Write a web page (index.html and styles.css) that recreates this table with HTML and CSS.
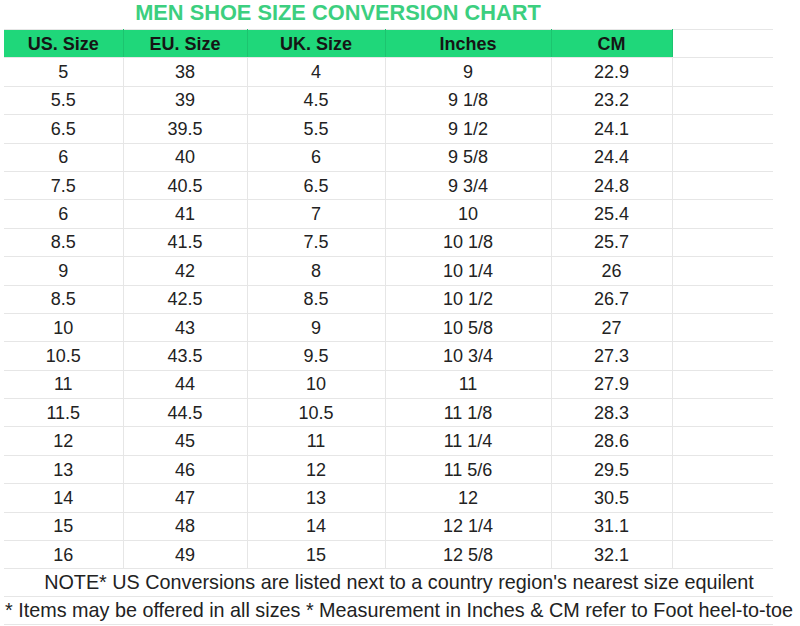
FILE: index.html
```html
<!DOCTYPE html>
<html>
<head>
<meta charset="utf-8">
<link rel="stylesheet" href="styles.css">
</head>
<body>
<div class="sheet">
  <div class="title-row"><div class="title">MEN SHOE SIZE CONVERSION CHART</div></div>
  <table class="chart">
    <colgroup>
      <col class="c1"><col class="c2"><col class="c3"><col class="c4"><col class="c5"><col class="c6">
    </colgroup>
    <thead>
      <tr><th>US. Size</th><th>EU. Size</th><th>UK. Size</th><th>Inches</th><th>CM</th><th class="blank"></th></tr>
    </thead>
    <tbody>
      <tr><td>5</td><td>38</td><td>4</td><td>9</td><td>22.9</td><td></td></tr>
      <tr><td>5.5</td><td>39</td><td>4.5</td><td>9 1/8</td><td>23.2</td><td></td></tr>
      <tr><td>6.5</td><td>39.5</td><td>5.5</td><td>9 1/2</td><td>24.1</td><td></td></tr>
      <tr><td>6</td><td>40</td><td>6</td><td>9 5/8</td><td>24.4</td><td></td></tr>
      <tr><td>7.5</td><td>40.5</td><td>6.5</td><td>9 3/4</td><td>24.8</td><td></td></tr>
      <tr><td>6</td><td>41</td><td>7</td><td>10</td><td>25.4</td><td></td></tr>
      <tr><td>8.5</td><td>41.5</td><td>7.5</td><td>10 1/8</td><td>25.7</td><td></td></tr>
      <tr><td>9</td><td>42</td><td>8</td><td>10 1/4</td><td>26</td><td></td></tr>
      <tr><td>8.5</td><td>42.5</td><td>8.5</td><td>10 1/2</td><td>26.7</td><td></td></tr>
      <tr><td>10</td><td>43</td><td>9</td><td>10 5/8</td><td>27</td><td></td></tr>
      <tr><td>10.5</td><td>43.5</td><td>9.5</td><td>10 3/4</td><td>27.3</td><td></td></tr>
      <tr><td>11</td><td>44</td><td>10</td><td>11</td><td>27.9</td><td></td></tr>
      <tr><td>11.5</td><td>44.5</td><td>10.5</td><td>11 1/8</td><td>28.3</td><td></td></tr>
      <tr><td>12</td><td>45</td><td>11</td><td>11 1/4</td><td>28.6</td><td></td></tr>
      <tr><td>13</td><td>46</td><td>12</td><td>11 5/6</td><td>29.5</td><td></td></tr>
      <tr><td>14</td><td>47</td><td>13</td><td>12</td><td>30.5</td><td></td></tr>
      <tr><td>15</td><td>48</td><td>14</td><td>12 1/4</td><td>31.1</td><td></td></tr>
      <tr><td>16</td><td>49</td><td>15</td><td>12 5/8</td><td>32.1</td><td></td></tr>
    </tbody>
  </table>
  <div class="note"><span class="note-text">NOTE* US Conversions are listed next to a country region's nearest size equilent</span></div>
  <div class="note"><span class="note-text">* Items may be offered in all sizes * Measurement in Inches &amp; CM refer to Foot heel-to-toe</span></div>
</div>
</body>
</html>
```

FILE: styles.css
```css
html, body {
  margin: 0;
  padding: 0;
  background: #ffffff;
}
body {
  width: 800px;
  height: 626px;
  overflow: hidden;
  font-family: "Liberation Sans", Arial, sans-serif;
  color: #222222;
}
.sheet {
  padding-left: 4px;
  width: 769px;
}
.title-row {
  width: 668px;
  height: 29px;
  display: flex;
  justify-content: center;
  align-items: center;
}
.title {
  font-weight: bold;
  font-size: 21.8px;
  line-height: 24px;
  color: #3ccf7f;
  white-space: nowrap;
  margin-top: -3px;
}
.chart {
  border-collapse: collapse;
  table-layout: fixed;
  width: 769px;
}
.c1 { width: 119px; }
.c2 { width: 124px; }
.c3 { width: 138px; }
.c4 { width: 166px; }
.c5 { width: 121px; }
.c6 { width: 101px; }
.chart th,
.chart td {
  padding: 0;
  height: 27.4px;
  text-align: center;
  border-top: 1px solid #e6e6e6;
  border-bottom: 1px solid #e6e6e6;
  border-left: 1px solid #e6e6e6;
  border-right: 1px solid #e6e6e6;
  font-size: 18px;
  line-height: 20px;
  white-space: nowrap;
}
.chart th:first-child,
.chart td:first-child {
  border-left: none;
}
.chart th:last-child,
.chart td:last-child {
  border-right: none;
}
.chart th {
  background: #1fd77a;
  color: #151515;
  font-weight: bold;
  border-left-color: #1cc46f;
  border-right-color: #1cc46f;
  border-top-color: #e6e6e6;
  border-bottom-color: #e6e6e6;
}
.chart th.blank {
  background: #ffffff;
  border-left-color: #e6e6e6;
}
.note {
  width: 769px;
  height: 27px;
  border-bottom: 1px solid #e6e6e6;
}
.note-text {
  display: block;
  width: 800px;
  margin-left: -5px;
  text-align: center;
  white-space: nowrap;
  font-size: 19.8px;
  line-height: 27px;
  color: #222222;
}
```
